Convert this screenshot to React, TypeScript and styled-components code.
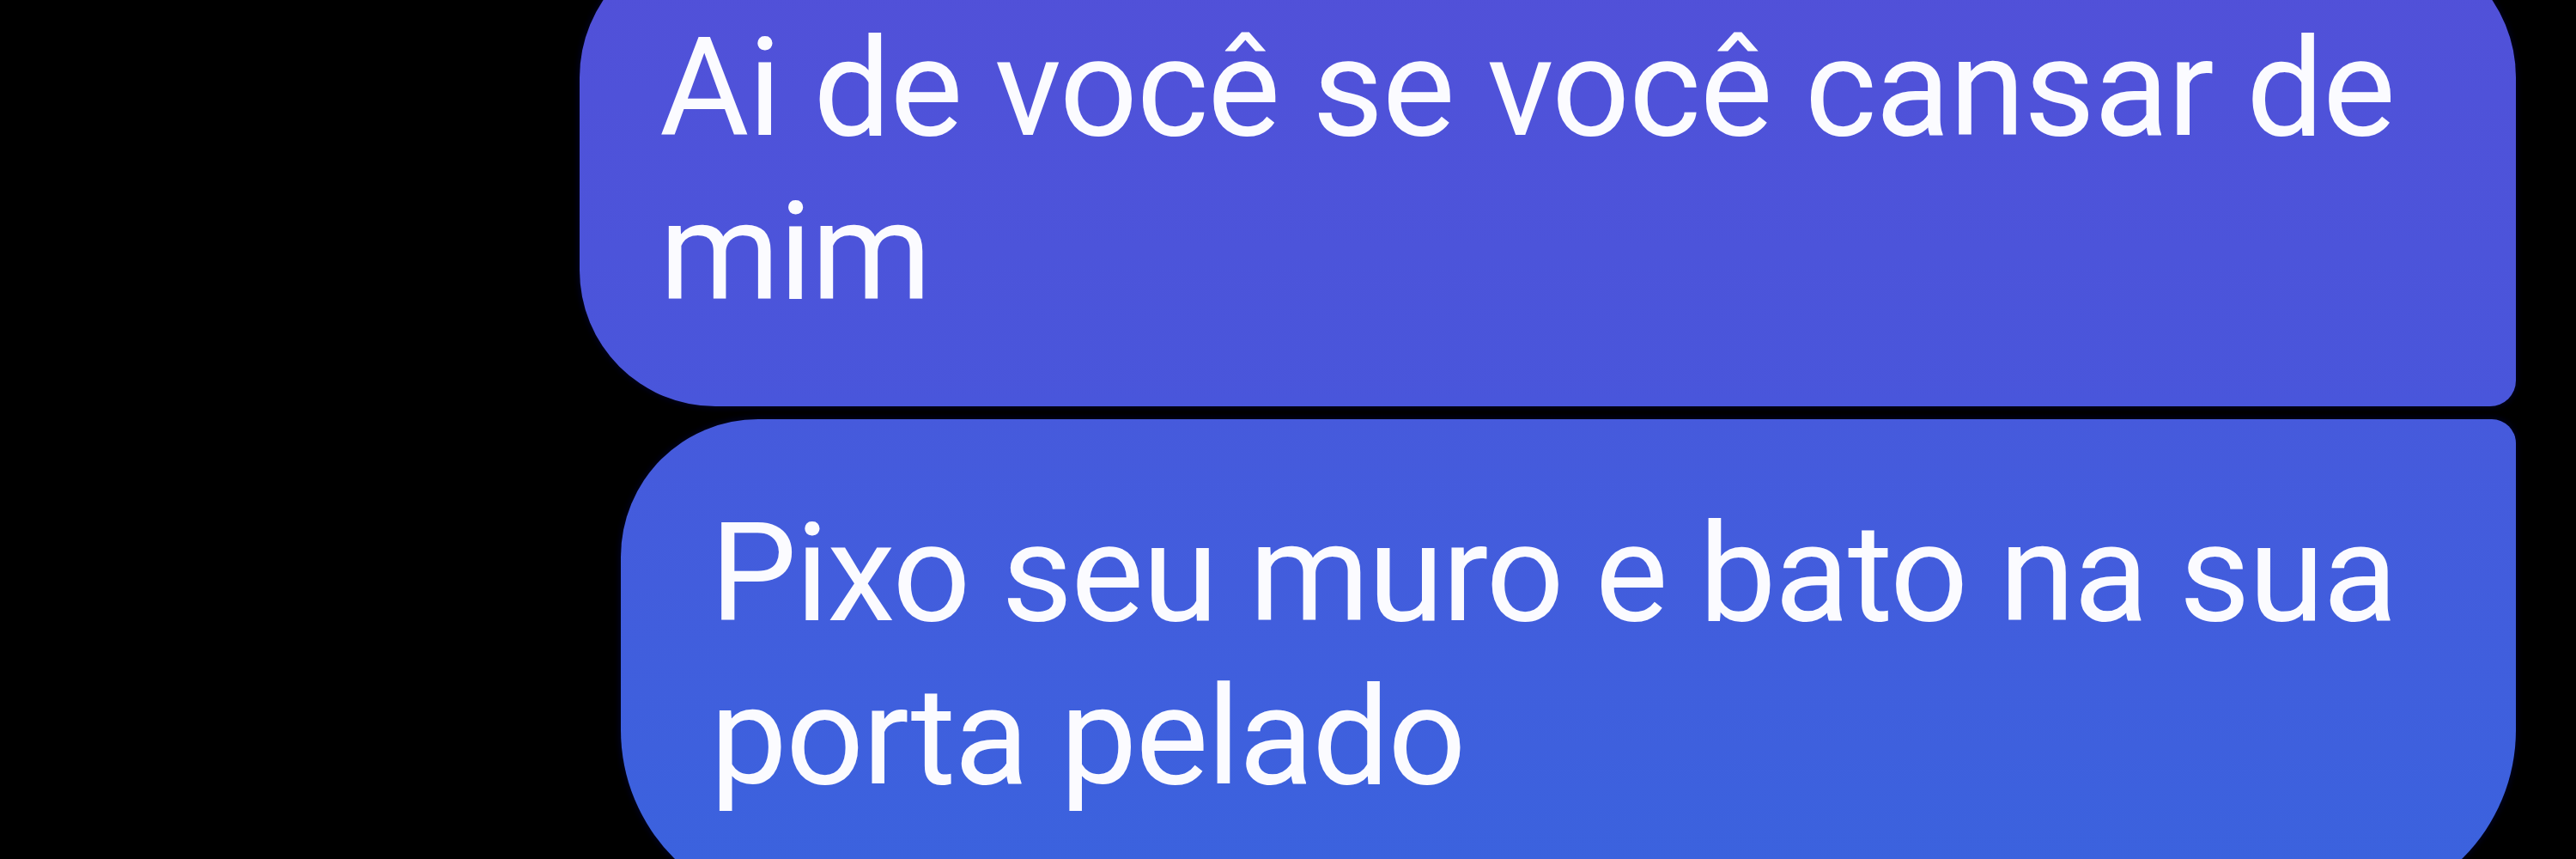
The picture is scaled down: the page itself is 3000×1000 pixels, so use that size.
import styled, { createGlobalStyle } from "styled-components"

const GlobalStyle = createGlobalStyle`
  html, body {
    margin: 0;
    padding: 0;
    background: #000;
  }
  body {
    width: 3000px;
    height: 1000px;
    overflow: hidden;
  }
`

type Corners = { tl: number; tr: number; br: number; bl: number }

type BubbleProps = {
  $width: number
  $padLeft: number
  $padTop: number
  $padBottom: number
  $corners: Corners
  $from: string
  $to: string
  $lineHeight: number
  $tracking: number
}

const messages: Array<{ lines: string[] } & BubbleProps> = [
  {
    lines: ["Ai de você se você cansar de", "mim"],
    $width: 2255,
    $padLeft: 93,
    $padTop: 77,
    $padBottom: 84,
    $corners: { tl: 160, tr: 160, br: 30, bl: 158 },
    $from: "#5250d8",
    $to: "#4956db",
    $lineHeight: 191,
    $tracking: -1.2,
  },
  {
    lines: ["Pixo seu muro e bato na sua", "porta pelado"],
    $width: 2207,
    $padLeft: 104,
    $padTop: 85,
    $padBottom: 107,
    $corners: { tl: 160, tr: 28, br: 210, bl: 210 },
    $from: "#465adc",
    $to: "#3a63de",
    $lineHeight: 190,
    $tracking: -1.8,
  },
]

export default function App() {
  return (
    <>
      <GlobalStyle />
      <Thread>
        {messages.map(({ lines, ...rest }, i) => (
          <Bubble key={i} {...rest}>
            {lines.map((l, j) => (
              <Line key={j}>{l}</Line>
            ))}
          </Bubble>
        ))}
      </Thread>
    </>
  )
}

const Thread = styled.div`
  width: 3000px;
  height: 1000px;
  box-sizing: border-box;
  padding-right: 70px;
  display: flex;
  flex-direction: column;
  align-items: flex-end;
  gap: 15px;
  background: #000;
  overflow: hidden;

  /* the first bubble is scrolled partly out of view */
  & > :first-child {
    margin-top: -70px;
  }
`

const Bubble = styled.div<BubbleProps>`
  flex-shrink: 0;
  box-sizing: border-box;
  width: ${p => p.$width}px;
  padding: ${p => p.$padTop}px 40px ${p => p.$padBottom}px ${p => p.$padLeft}px;
  border-radius: ${p =>
    `${p.$corners.tl}px ${p.$corners.tr}px ${p.$corners.br}px ${p.$corners.bl}px`};
  background: linear-gradient(180deg, ${p => p.$from}, ${p => p.$to});
  box-shadow: 0 0 6px 2px rgba(0, 4, 40, 0.8);
  color: #fbfbff;
  font-family: Roboto, "Noto Sans", sans-serif;
  font-size: 160px;
  letter-spacing: ${p => p.$tracking}px;
  line-height: ${p => p.$lineHeight}px;
`

const Line = styled.div`
  white-space: nowrap;
`
